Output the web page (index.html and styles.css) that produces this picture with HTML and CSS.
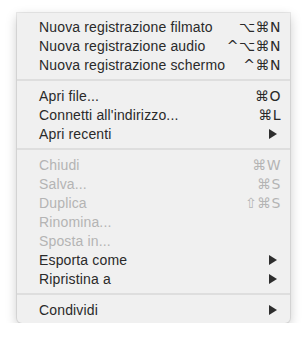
FILE: index.html
```html
<!DOCTYPE html>
<html lang="it">
<head>
    <meta charset="UTF-8">
    <meta name="viewport" content="width=device-width, initial-scale=1.0">
    <title>Menu Archivio</title>
    <link rel="stylesheet" href="styles.css">
</head>
<body>
    <div class="menu">
        <div class="item"><span>Nuova registrazione filmato</span><span class="keys">⌥⌘N</span></div>
        <div class="item"><span>Nuova registrazione audio</span><span class="keys">^⌥⌘N</span></div>
        <div class="item"><span>Nuova registrazione schermo</span><span class="keys">^⌘N</span></div>
        <div class="sep"></div>
        <div class="item"><span>Apri file...</span><span class="keys">⌘O</span></div>
        <div class="item"><span>Connetti all'indirizzo...</span><span class="keys">⌘L</span></div>
        <div class="item"><span>Apri recenti</span><span class="arrow"></span></div>
        <div class="sep"></div>
        <div class="item disabled"><span>Chiudi</span><span class="keys">⌘W</span></div>
        <div class="item disabled"><span>Salva...</span><span class="keys">⌘S</span></div>
        <div class="item disabled"><span>Duplica</span><span class="keys">⇧⌘S</span></div>
        <div class="item disabled"><span>Rinomina...</span></div>
        <div class="item disabled"><span>Sposta in...</span></div>
        <div class="item"><span>Esporta come</span><span class="arrow"></span></div>
        <div class="item"><span>Ripristina a</span><span class="arrow"></span></div>
        <div class="sep"></div>
        <div class="item"><span>Condividi</span><span class="arrow"></span></div>
    </div>
</body>
</html>
```

FILE: styles.css
```css
body {
    margin: 0;
    background: #ffffff;
    font-family: "Liberation Sans", Arial, sans-serif;
}
.menu {
    margin: 13px 0 0 17px;
    width: 273px;
    padding: 4px 0;
    background: #f0f0f0;
    border-radius: 0 0 5px 5px;
    box-shadow: 0 0 0 1px rgba(0, 0, 0, 0.08), 0 4px 12px rgba(0, 0, 0, 0.22);
}
.item {
    display: flex;
    justify-content: space-between;
    align-items: center;
    height: 19px;
    padding: 0 9px 0 22px;
    font-size: 14px;
    letter-spacing: 0.15px;
    color: #2a2a2a;
}
.item.disabled {
    color: #b4b4b4;
}
.keys {
    font-family: "DejaVu Sans", sans-serif;
    font-size: 14px;
    letter-spacing: 0.5px;
}
.arrow {
    width: 0;
    height: 0;
    margin-right: 4px;
    border-top: 5px solid transparent;
    border-bottom: 5px solid transparent;
    border-left: 8px solid #2e2e2e;
}
.sep {
    height: 2px;
    margin: 5px 0;
    background: #dedede;
}
```
